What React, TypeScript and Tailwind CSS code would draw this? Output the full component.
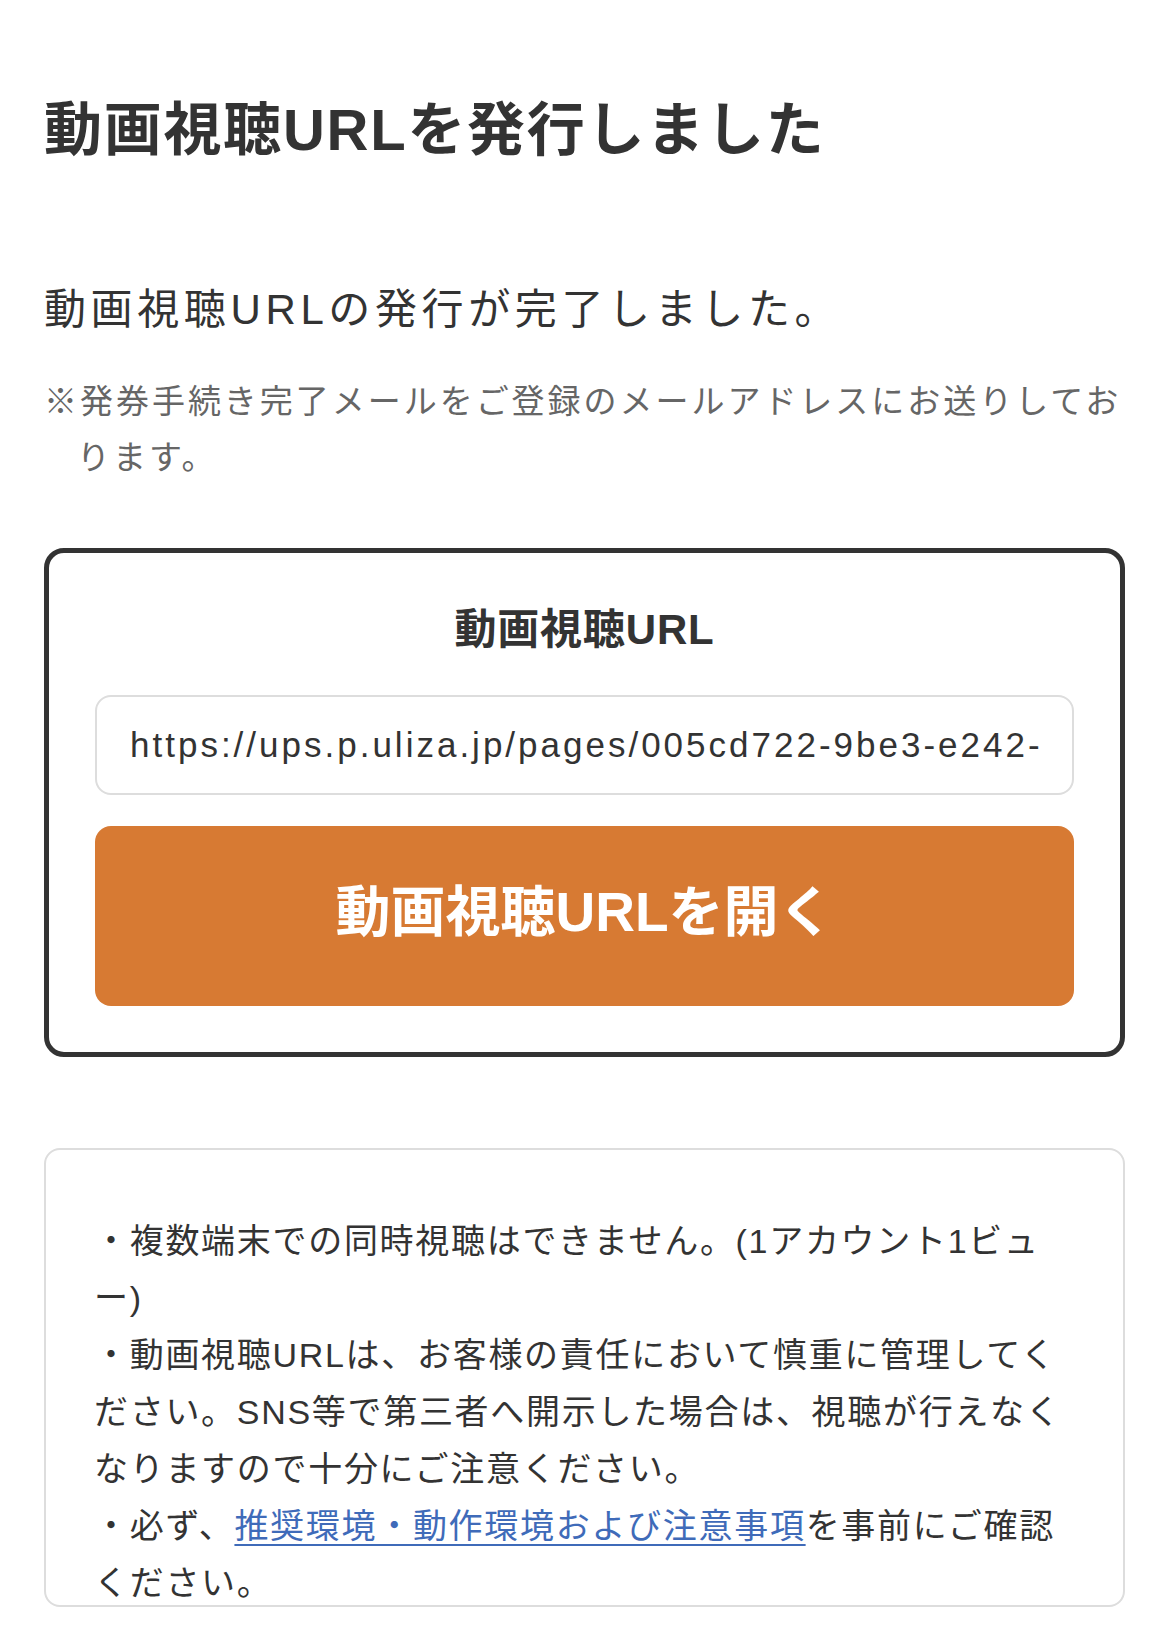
import { useState } from "react";

const watchUrl =
    "https://ups.p.uliza.jp/pages/005cd722-9be3-e242-f3c1-8a7d2b6e4c90";

export default function App() {
    const [url] = useState(watchUrl);

    function openUrl() {
        window.open(url, "_blank");
    }

    return (
        <main className="min-h-[1649px] bg-white px-[44px] pb-10 pt-[89px] font-['Liberation_Sans','Noto_Sans_CJK_JP',sans-serif] text-[#333]">
            <h1 className="text-[58px] font-bold leading-[81px] tracking-[0.03em]">
                動画視聴URLを発行しました
            </h1>

            <p className="mt-[108px] text-[42px] leading-[63px] tracking-[0.11em]">
                動画視聴URLの発行が完了しました。
            </p>

            <p className="mt-[33px] whitespace-nowrap pl-[1em] -indent-[1em] text-[33px] leading-[56px] tracking-[0.09em] text-[#666]">
                ※発券手続き完了メールをご登録のメールアドレスにお送りしてお
                <br />
                ります。
            </p>

            <section className="mt-[62px] rounded-[20px] border-[5px] border-[#333] px-[46px] pb-[46px] pt-[47px]">
                <h2 className="text-center text-[42px] font-bold leading-[60px] tracking-[0.02em]">
                    動画視聴URL
                </h2>

                <input
                    readOnly
                    value={url}
                    className="mt-[35px] block h-[100px] w-full rounded-[16px] border-2 border-[#ddd] bg-white pl-[33px] pr-[30px] text-[35px] tracking-[3px] text-[#333] outline-none"
                />

                <button
                    type="button"
                    onClick={openUrl}
                    className="mt-[31px] flex h-[180px] w-full items-center justify-center rounded-[16px] bg-[#d77a33] pb-[8px] text-[55px] font-bold text-white"
                >
                    動画視聴URLを開く
                </button>
            </section>

            <div className="mt-[91px] h-[459px] overflow-hidden whitespace-nowrap rounded-[16px] border-2 border-[#ddd] pl-[48px] pr-[30px] pt-[63px] text-[34px] leading-[57px] tracking-[0.05em]">
                <p>
                    ・複数端末での同時視聴はできません。(1アカウント1ビュ
                    <br />
                    ー)
                </p>
                <p>
                    ・動画視聴URLは、お客様の責任において慎重に管理してく
                    <br />
                    ださい。SNS等で第三者へ開示した場合は、視聴が行えなく
                    <br />
                    なりますので十分にご注意ください。
                </p>
                <p>
                    ・必ず、
                    <a
                        href="#"
                        className="text-[#3f6bb9] underline decoration-2 underline-offset-[6px]"
                    >
                        推奨環境・動作環境および注意事項
                    </a>
                    を事前にご確認
                    <br />
                    ください。
                </p>
            </div>
        </main>
    );
}
